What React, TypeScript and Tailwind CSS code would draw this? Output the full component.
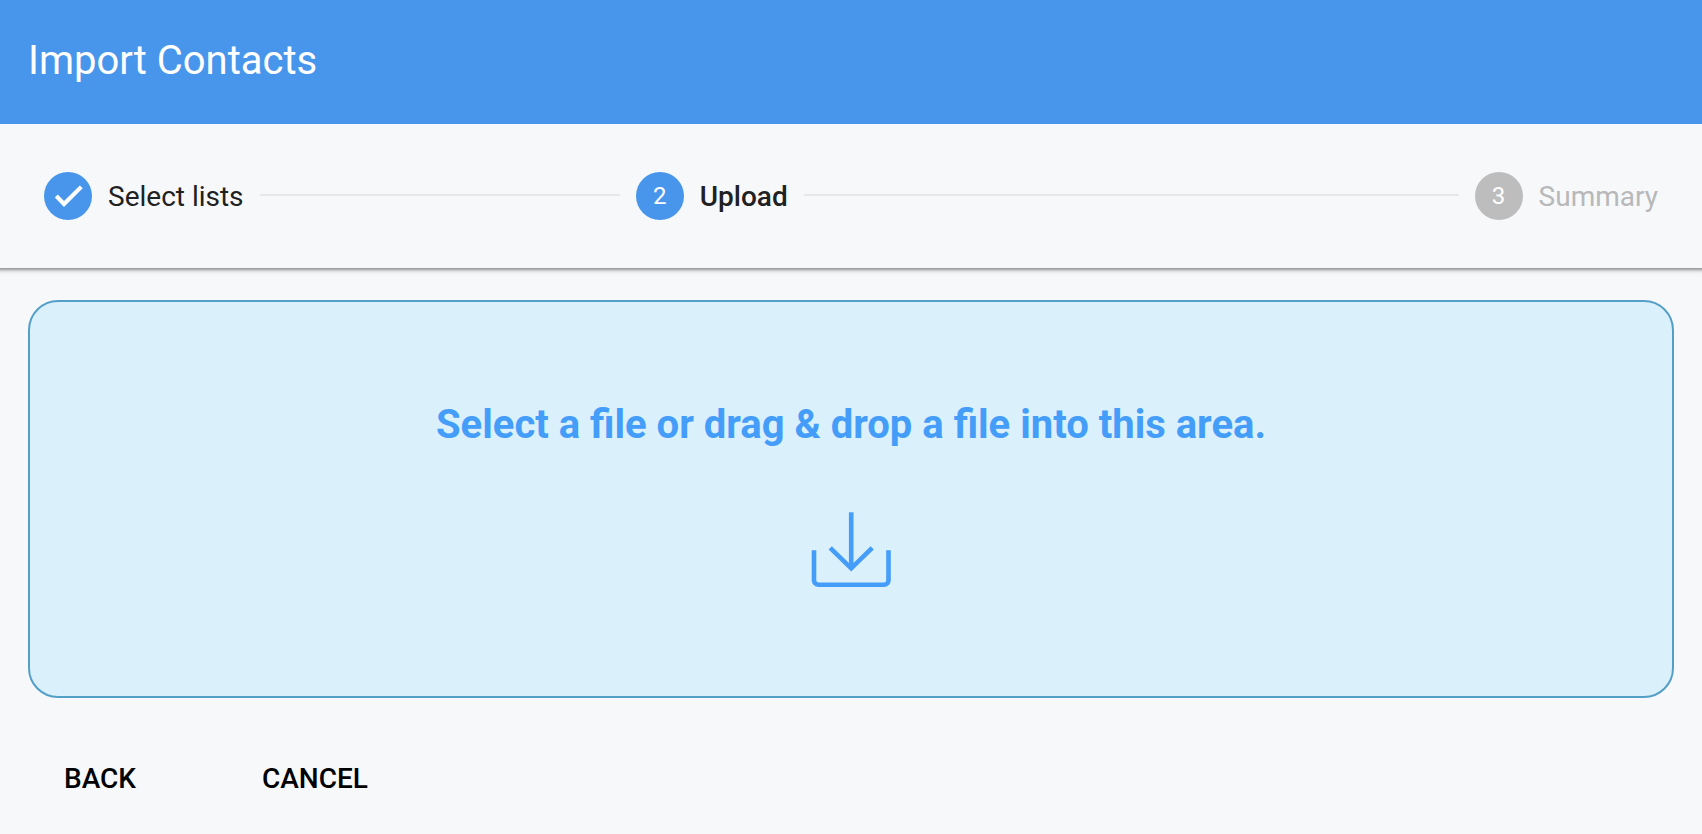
import { Fragment, useState } from "react";

type StepState = "done" | "active" | "pending";

const steps: { label: string; state: StepState }[] = [
  { label: "Select lists", state: "done" },
  { label: "Upload", state: "active" },
  { label: "Summary", state: "pending" },
];

const connectorGrow = ["grow-11", "grow-20"];

const badgeStyles: Record<StepState, string> = {
  done: "bg-[#4796ec]",
  active: "bg-[#4796ec]",
  pending: "bg-[#bdbdbd]",
};

const labelStyles: Record<StepState, string> = {
  done: "font-normal text-[#212121]",
  active: "font-medium text-[#212121]",
  pending: "font-normal text-[#b7b8b9]",
};

function CheckIcon() {
  return (
    <svg viewBox="0 0 48 48" className="size-12" fill="white" aria-hidden="true">
      <path d="M20 35 10.8 25.6 13.8 22.6 20 28.9 35.8 13.4 38.7 16.3Z" />
    </svg>
  );
}

function DownloadIcon() {
  return (
    <svg
      viewBox="0 0 80 76"
      className="h-[76px] w-20"
      fill="none"
      stroke="currentColor"
      strokeWidth="4.6"
      aria-hidden="true"
    >
      <path d="M40.2 0.3V56" />
      <path d="M19.2 35.9 40.2 56.4 61.2 35.9" />
      <path d="M3 38.3V68.2A4.5 4.5 0 0 0 7.5 72.7H73A4.5 4.5 0 0 0 77.5 68.2V38.3" />
    </svg>
  );
}

function Stepper() {
  return (
    <ol className="flex items-center gap-4 bg-[#f7f8fa] px-11 py-12 shadow-[0_-2px_2px_4px_rgba(0,0,0,0.2),0_-2px_4px_4px_rgba(0,0,0,0.18),0_-2px_6px_4px_rgba(0,0,0,0.12)]">
      {steps.map((step, i) => (
        <Fragment key={step.label}>
          {i > 0 && (
            <li aria-hidden="true" className={`basis-0 pb-0.5 ${connectorGrow[i - 1]}`}>
              <div className="h-0.5 bg-[#e6e7e9]" />
            </li>
          )}
          <li
            className="flex items-center gap-4"
            aria-current={step.state === "active" ? "step" : undefined}
          >
            <span
              className={`flex size-12 items-center justify-center rounded-full text-2xl text-white ${badgeStyles[step.state]}`}
            >
              {step.state === "done" ? <CheckIcon /> : i + 1}
            </span>
            <span className={`pt-0.5 text-[28px] leading-10 ${labelStyles[step.state]}`}>
              {step.label}
            </span>
          </li>
        </Fragment>
      ))}
    </ol>
  );
}

function DropZone() {
  const [, setFile] = useState<File | null>(null);
  return (
    <label
      className="flex cursor-pointer flex-col items-center gap-16 rounded-[30px] border-2 border-[#549fc7] bg-[#daf0fb] px-8 pt-[98px] pb-[108px] text-[#449df9]"
      onDragOver={(e) => e.preventDefault()}
      onDrop={(e) => {
        e.preventDefault();
        setFile(e.dataTransfer.files[0] ?? null);
      }}
    >
      <span className="pt-0.5 text-center text-[40px] leading-[46px] font-bold">
        Select a file or drag &amp; drop a file into this area.
      </span>
      <DownloadIcon />
      <input
        type="file"
        className="sr-only"
        onChange={(e) => setFile(e.target.files?.[0] ?? null)}
      />
    </label>
  );
}

function TextButton({ children }: { children: string }) {
  return (
    <button
      type="button"
      className="min-w-32 cursor-pointer rounded-lg px-4 py-3 text-[28px] leading-[50px] font-medium text-black uppercase hover:bg-black/5"
    >
      {children}
    </button>
  );
}

export default function App() {
  return (
    <div className="min-h-screen overflow-x-clip bg-[#f7f8fa] font-['Roboto',sans-serif]">
      <header className="relative z-10 bg-[#4796ec] px-7 pt-[31px] pb-[33px] text-white">
        <h1 className="text-[40px] leading-[60px] font-normal">Import Contacts</h1>
      </header>
      <Stepper />
      <main className="px-7 pt-8">
        <DropZone />
        <div className="flex gap-[82px] px-2 pt-11">
          <TextButton>Back</TextButton>
          <TextButton>Cancel</TextButton>
        </div>
      </main>
    </div>
  );
}
